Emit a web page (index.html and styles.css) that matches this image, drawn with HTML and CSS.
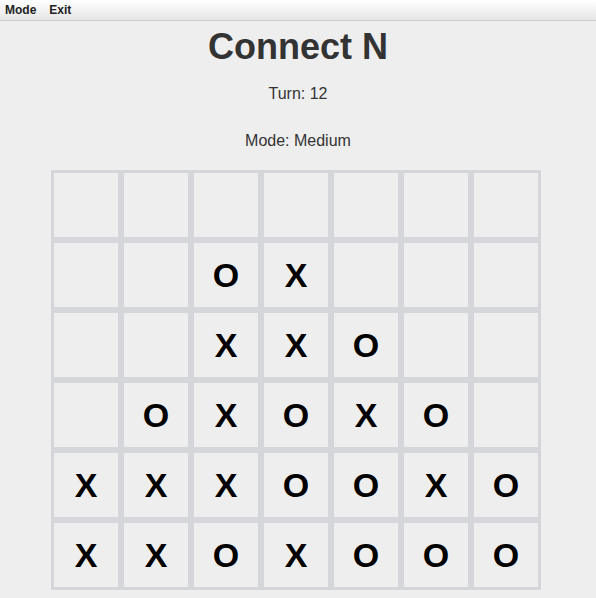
FILE: index.html
```html
<!DOCTYPE html>
<html>
<head>
<meta charset="utf-8">
<link rel="stylesheet" href="styles.css">
</head>
<body>
<div class="menubar">
  <span class="menu-item">Mode</span>
  <span class="menu-item">Exit</span>
</div>
<main class="content">
  <h1 class="title">Connect N</h1>
  <p class="info">Turn: 12</p>
  <p class="info">Mode: Medium</p>
  <div class="board-wrap">
    <div class="board">
      <div class="cell"></div><div class="cell"></div><div class="cell"></div><div class="cell"></div><div class="cell"></div><div class="cell"></div><div class="cell"></div>
      <div class="cell"></div><div class="cell"></div><div class="cell">O</div><div class="cell">X</div><div class="cell"></div><div class="cell"></div><div class="cell"></div>
      <div class="cell"></div><div class="cell"></div><div class="cell">X</div><div class="cell">X</div><div class="cell">O</div><div class="cell"></div><div class="cell"></div>
      <div class="cell"></div><div class="cell">O</div><div class="cell">X</div><div class="cell">O</div><div class="cell">X</div><div class="cell">O</div><div class="cell"></div>
      <div class="cell">X</div><div class="cell">X</div><div class="cell">X</div><div class="cell">O</div><div class="cell">O</div><div class="cell">X</div><div class="cell">O</div>
      <div class="cell">X</div><div class="cell">X</div><div class="cell">O</div><div class="cell">X</div><div class="cell">O</div><div class="cell">O</div><div class="cell">O</div>
    </div>
  </div>
</main>
</body>
</html>
```
FILE: styles.css
```css
html, body {
  margin: 0;
  padding: 0;
  background: #eeeeee;
  font-family: "Liberation Sans", Arial, sans-serif;
  color: #333333;
  overflow: hidden;
}
.menubar {
  height: 20px;
  display: flex;
  align-items: center;
  gap: 13px;
  padding-left: 5px;
  background: linear-gradient(#ffffff, #e6e6e6);
  border-bottom: 1px solid #cfcfcf;
}
.menu-item {
  font-size: 12px;
  font-weight: bold;
  color: #222222;
}
.content {
  display: flex;
  flex-direction: column;
  align-items: center;
}
.title {
  margin: 6px 0 0;
  font-size: 36px;
  line-height: 40px;
  font-weight: bold;
  color: #333333;
}
.info {
  margin: 0;
  margin-top: 18px;
  font-size: 16px;
  line-height: 18px;
}
.info + .info {
  margin-top: 29px;
}
.board-wrap {
  margin-top: 20px;
  padding-right: 4px;
}
.board {
  display: grid;
  grid-template-columns: repeat(7, 70px);
  grid-template-rows: repeat(6, 70px);
}
.cell {
  box-sizing: border-box;
  border: 3px solid #d4d6da;
  background: #eeeeee;
  display: flex;
  align-items: center;
  justify-content: center;
  font-size: 34px;
  font-weight: bold;
  color: #000000;
}
```
